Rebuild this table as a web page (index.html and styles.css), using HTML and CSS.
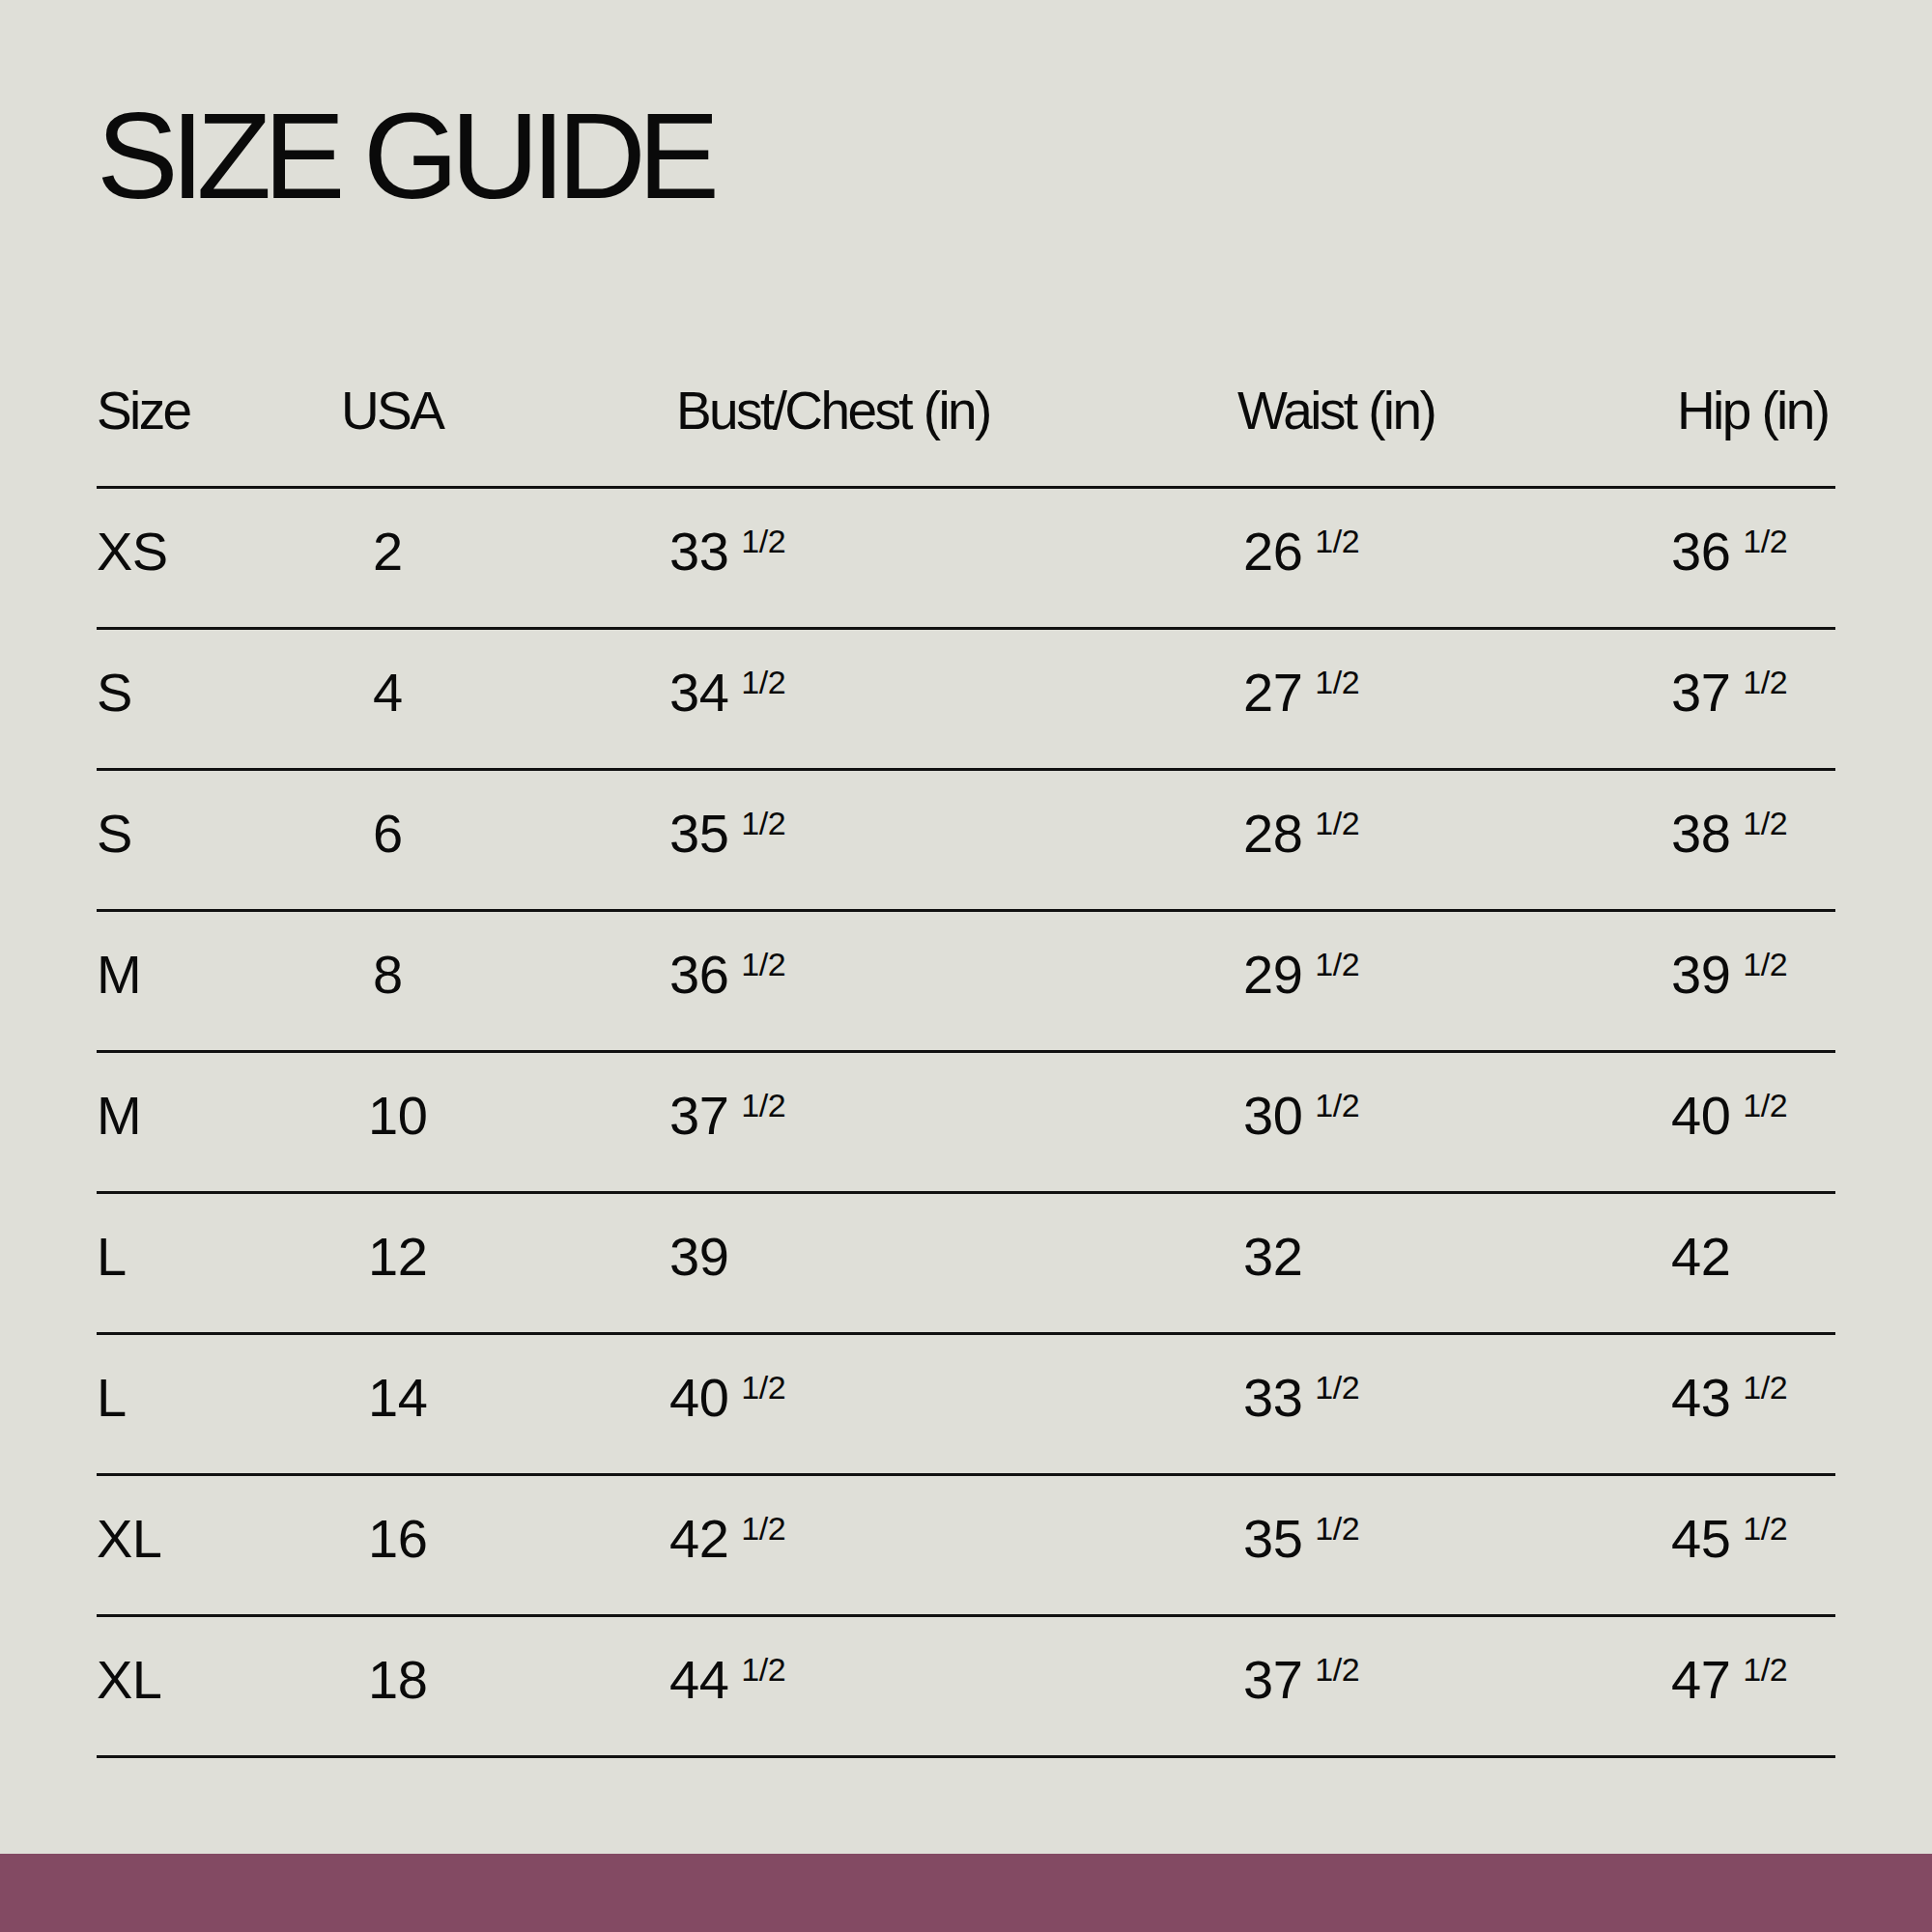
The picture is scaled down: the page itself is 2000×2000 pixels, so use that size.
FILE: index.html
```html
<!DOCTYPE html>
<html lang="en">
<head>
<meta charset="utf-8">
<title>Size Guide</title>
<link rel="stylesheet" href="styles.css">
</head>
<body>
<div class="page">
  <main class="content">
    <h1 class="title">SIZE GUIDE</h1>
    <div class="table">
      <div class="row head">
        <div>Size</div><div>USA</div><div>Bust/Chest (in)</div><div>Waist (in)</div><div>Hip (in)</div>
      </div>
      <div class="row body">
        <div>XS</div><div class="one">2</div><div>33 <span class="frac">1/2</span></div><div>26 <span class="frac">1/2</span></div><div>36 <span class="frac">1/2</span></div>
      </div>
      <div class="row body">
        <div>S</div><div class="one">4</div><div>34 <span class="frac">1/2</span></div><div>27 <span class="frac">1/2</span></div><div>37 <span class="frac">1/2</span></div>
      </div>
      <div class="row body">
        <div>S</div><div class="one">6</div><div>35 <span class="frac">1/2</span></div><div>28 <span class="frac">1/2</span></div><div>38 <span class="frac">1/2</span></div>
      </div>
      <div class="row body">
        <div>M</div><div class="one">8</div><div>36 <span class="frac">1/2</span></div><div>29 <span class="frac">1/2</span></div><div>39 <span class="frac">1/2</span></div>
      </div>
      <div class="row body">
        <div>M</div><div>10</div><div>37 <span class="frac">1/2</span></div><div>30 <span class="frac">1/2</span></div><div>40 <span class="frac">1/2</span></div>
      </div>
      <div class="row body">
        <div>L</div><div>12</div><div>39</div><div>32</div><div>42</div>
      </div>
      <div class="row body">
        <div>L</div><div>14</div><div>40 <span class="frac">1/2</span></div><div>33 <span class="frac">1/2</span></div><div>43 <span class="frac">1/2</span></div>
      </div>
      <div class="row body">
        <div>XL</div><div>16</div><div>42 <span class="frac">1/2</span></div><div>35 <span class="frac">1/2</span></div><div>45 <span class="frac">1/2</span></div>
      </div>
      <div class="row body">
        <div>XL</div><div>18</div><div>44 <span class="frac">1/2</span></div><div>37 <span class="frac">1/2</span></div><div>47 <span class="frac">1/2</span></div>
      </div>
    </div>
  </main>
  <footer class="band"></footer>
</div>
</body>
</html>
```

FILE: styles.css
```css
html, body {
  margin: 0;
  padding: 0;
}

body {
  background: #dfdfd8;
  color: #0a0a0a;
  font-family: "Liberation Sans", Arial, sans-serif;
}

.page {
  min-height: 100vh;
  display: flex;
  flex-direction: column;
}

.content {
  flex: 1;
  padding: 0 100px;
}

.title {
  margin: 98px 0 0;
  font-size: 127px;
  line-height: 1;
  font-weight: 400;
  letter-spacing: -8.3px;
}

.table {
  margin-top: 173px;
}

.row {
  display: grid;
  box-sizing: border-box;
  border-bottom: 3px solid #111;
  white-space: nowrap;
}

.head {
  grid-template-columns: 253px 347px 581px 455px auto;
  height: 108px;
  font-size: 55px;
  line-height: 1;
  letter-spacing: -2.6px;
}

.body {
  grid-template-columns: 281px 312px 594px 443px auto;
  height: 146px;
  padding-top: 37px;
  font-size: 56px;
  line-height: 1;
  letter-spacing: -0.5px;
}

.one {
  padding-left: 5px;
}

.frac {
  font-size: 34px;
  line-height: 1;
  vertical-align: 18px;
  margin-left: -2px;
  letter-spacing: -0.5px;
}

.band {
  height: 81px;
  background: #834a63;
}
```
